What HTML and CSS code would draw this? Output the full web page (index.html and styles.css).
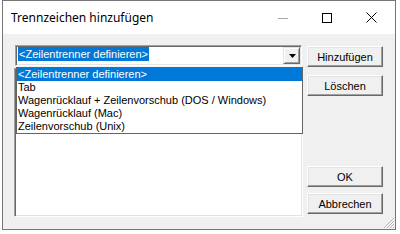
FILE: index.html
```html
<!DOCTYPE html>
<html lang="de">
<head>
<meta charset="utf-8">
<title>Trennzeichen hinzufügen</title>
<link rel="stylesheet" href="styles.css">
</head>
<body>
<div class="window">
  <div class="titlebar">
    <span class="title">Trennzeichen hinzufügen</span>
    <div class="caption">
      <span class="cap-btn"><svg width="10" height="10" viewBox="0 0 10 10"><path d="M0 5.5H10" stroke="#a6a6a6" stroke-width="1"/></svg></span>
      <span class="cap-btn"><svg width="10" height="10" viewBox="0 0 10 10"><rect x="0.5" y="0.5" width="9" height="9" fill="none" stroke="#000" stroke-width="1"/></svg></span>
      <span class="cap-btn"><svg width="11" height="11" viewBox="0 0 11 11"><path d="M0.5 0.5L10.5 10.5M10.5 0.5L0.5 10.5" stroke="#000" stroke-width="1"/></svg></span>
    </div>
  </div>
  <div class="body">
    <div class="left">
      <div class="combo">
        <div class="combo-field"><span class="sel">&lt;Zeilentrenner definieren&gt;</span></div>
        <div class="combo-arrow"><svg width="7" height="4" viewBox="0 0 7 4"><path d="M0 0H7L3.5 4Z" fill="#000"/></svg></div>
        <ul class="dropdown">
          <li class="active">&lt;Zeilentrenner definieren&gt;</li>
          <li>Tab</li>
          <li>Wagenrücklauf + Zeilenvorschub (DOS / Windows)</li>
          <li>Wagenrücklauf (Mac)</li>
          <li>Zeilenvorschub (Unix)</li>
        </ul>
      </div>
      <div class="listbox"></div>
    </div>
    <div class="right">
      <div class="group top">
        <button class="btn">Hinzufügen</button>
        <button class="btn">Löschen</button>
      </div>
      <div class="group bottom">
        <button class="btn">OK</button>
        <button class="btn">Abbrechen</button>
      </div>
    </div>
    <svg class="grip" width="12" height="12" viewBox="0 0 12 12">
      <path d="M11 1L1 11M11 4L4 11M11 7L7 11M11 10L10 11" stroke="#b4b4b4" stroke-width="1"/>
      <path d="M11.5 1.5L1.5 11.5M11.5 4.5L4.5 11.5M11.5 7.5L7.5 11.5" stroke="#ffffff" stroke-width="0.6"/>
    </svg>
  </div>
</div>
</body>
</html>
```
FILE: styles.css
```css
* { box-sizing: border-box; }
html, body { margin: 0; padding: 0; background: #ffffff; }
body {
  font-family: "Liberation Sans", Arial, sans-serif;
  font-size: 11px;
  color: #000;
}
.window {
  margin-left: 2px;
  width: 394px;
  height: 230px;
  border: 1px solid #767676;
  display: flex;
  flex-direction: column;
  background: #f0f0f0;
}
.titlebar {
  height: 33px;
  background: #ffffff;
  display: flex;
  align-items: center;
  padding-left: 8px;
  padding-right: 2px;
}
.title {
  font-family: "Noto Sans", "Liberation Sans", sans-serif;
  font-size: 12px;
  color: #000;
  line-height: 16px;
  padding-top: 1px;
}
.caption {
  margin-left: auto;
  display: flex;
  height: 100%;
}
.cap-btn {
  width: 44px;
  display: flex;
  align-items: center;
  justify-content: center;
}
.body {
  position: relative;
  flex: 1;
  display: flex;
  padding: 11px 12px 12px 11px;
  gap: 4px;
}
.left {
  width: 289px;
  display: flex;
  flex-direction: column;
}
.combo {
  position: relative;
  margin: 0 1px;
  height: 21px;
  display: flex;
  background: #fff;
  border-style: solid;
  border-width: 1px;
  border-color: #a0a0a0 #ffffff #ffffff #a0a0a0;
  box-shadow: inset 1px 1px 0 #696969, inset -1px -1px 0 #e3e3e3;
  padding: 1px 1px 1px 1px;
}
.combo-field {
  flex: 1;
  padding-left: 1px;
  display: flex;
  align-items: flex-start;
}
.sel {
  background: #0078d7;
  color: #fff;
  line-height: 14px;
  height: 14px;
  padding: 0 1px;
}
.combo-arrow {
  width: 17px;
  height: 17px;
  background: #f0f0f0;
  border-style: solid;
  border-width: 1px;
  border-color: #e3e3e3 #696969 #696969 #e3e3e3;
  box-shadow: inset 1px 1px 0 #ffffff, inset -1px -1px 0 #a0a0a0;
  display: flex;
  align-items: center;
  justify-content: center;
}
.combo-arrow svg { margin-top: 1px; margin-left: 1px; }
.dropdown {
  position: absolute;
  top: 21px;
  left: 0px;
  width: 287px;
  margin: 0;
  padding: 0;
  list-style: none;
  background: #fff;
  border: 1px solid #646464;
  z-index: 2;
}
.dropdown li {
  height: 13px;
  line-height: 13px;
  padding-left: 1px;
  white-space: nowrap;
}
.dropdown li.active {
  background: #0078d7;
  color: #fff;
}
.listbox {
  margin-top: 2px;
  flex: 1;
  background: #fff;
  border-style: solid;
  border-width: 1px;
  border-color: #a0a0a0 #ffffff #ffffff #a0a0a0;
  box-shadow: inset 1px 1px 0 #696969, inset -1px -1px 0 #e3e3e3;
}
.right {
  width: 76px;
  display: flex;
  flex-direction: column;
  justify-content: space-between;
  padding-top: 1px;
  padding-bottom: 3px;
}
.group {
  display: flex;
  flex-direction: column;
}
.group.top { gap: 8px; }
.group.bottom { gap: 6px; }
.btn {
  width: 76px;
  height: 21px;
  font-family: "Liberation Sans", Arial, sans-serif;
  font-size: 11px;
  color: #000;
  background: #f0f0f0;
  border-style: solid;
  border-width: 1px;
  border-color: #ffffff #696969 #696969 #ffffff;
  box-shadow: inset -1px -1px 0 #a0a0a0, inset 1px 1px 0 #e3e3e3;
  padding: 0;
  margin: 0;
}
.grip {
  position: absolute;
  right: 0;
  bottom: 0;
}
```
